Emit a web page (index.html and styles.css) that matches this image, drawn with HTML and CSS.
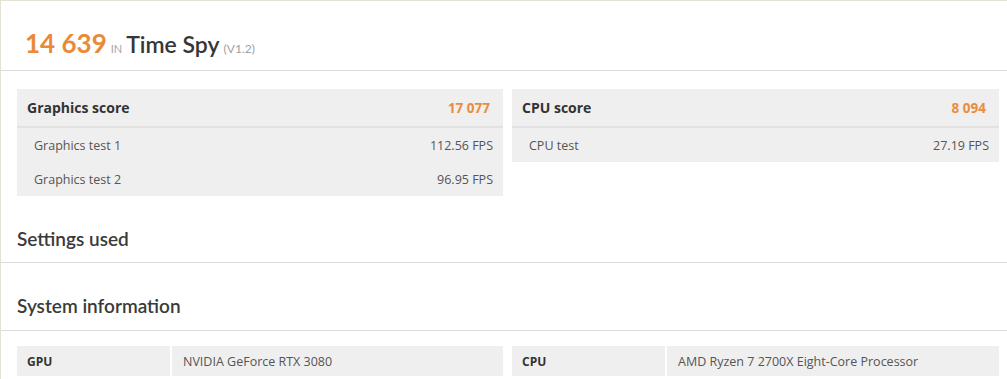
FILE: index.html
```html
<!DOCTYPE html>
<html>
<head>
<meta charset="utf-8">
<link rel="stylesheet" href="styles.css">
</head>
<body>
<div class="page">
  <header class="result-head">
    <span class="total">14 639</span>
    <span class="in">IN</span>
    <span class="bench">Time Spy</span>
    <span class="ver">(V1.2)</span>
  </header>

  <section class="scores">
    <div class="score-box">
      <div class="score-head">
        <span class="score-name">Graphics score</span>
        <span class="score-val">17 077</span>
      </div>
      <div class="score-row"><span>Graphics test 1</span><span>112.56 FPS</span></div>
      <div class="score-row"><span>Graphics test 2</span><span>96.95 FPS</span></div>
    </div>
    <div class="score-box">
      <div class="score-head">
        <span class="score-name">CPU score</span>
        <span class="score-val">8 094</span>
      </div>
      <div class="score-row"><span>CPU test</span><span>27.19 FPS</span></div>
    </div>
  </section>

  <h2 class="section-title">Settings used</h2>
  <h2 class="section-title sys">System information</h2>

  <section class="sysinfo">
    <div class="info-row">
      <div class="info-label">GPU</div>
      <div class="info-value">NVIDIA GeForce RTX 3080</div>
    </div>
    <div class="info-row">
      <div class="info-label">CPU</div>
      <div class="info-value">AMD Ryzen 7 2700X Eight-Core Processor</div>
    </div>
  </section>
</div>
</body>
</html>
```

FILE: styles.css
```css
html, body {
  margin: 0;
  padding: 0;
  background: #fff;
}
body {
  font-family: "Open Sans", "Liberation Sans", sans-serif;
  color: #333;
}
.page {
  border-left: 1px solid #e6e2d2;
  border-top: 1px solid #e6e2d2;
  min-height: 378px;
  overflow: hidden;
}
.result-head {
  height: 70px;
  border-bottom: 1px solid #dcdcdc;
  display: flex;
  align-items: baseline;
  padding: 0 0 0 24px;
  box-sizing: border-box;
  padding-top: 26px;
  font-family: Lato, "Open Sans", sans-serif;
}
.total {
  font-size: 26px;
  font-weight: 700;
  color: #e88a3a;
}
.in {
  font-size: 11px;
  color: #a5a5a5;
  margin-left: 4px;
  margin-right: 4px;
}
.bench {
  font-size: 23px;
  font-weight: 600;
  color: #363636;
}
.ver {
  font-size: 12px;
  color: #a0a0a0;
  margin-left: 4px;
}
.scores {
  display: grid;
  grid-template-columns: 486px 487px;
  column-gap: 9px;
  padding: 18px 0 0 16px;
  align-items: start;
}
.score-box {
  background: #efefef;
}
.score-head {
  height: 39px;
  display: flex;
  justify-content: space-between;
  align-items: center;
  padding: 0 13px 0 10px;
  border-bottom: 2px solid #e2e2e2;
  box-sizing: border-box;
}
.score-name {
  font-size: 14px;
  font-weight: 700;
  color: #333;
}
.score-val {
  font-size: 13.5px;
  font-weight: 700;
  color: #ea8c3e;
}
.score-row {
  height: 34px;
  display: flex;
  justify-content: space-between;
  align-items: center;
  padding: 0 10px 0 17px;
  font-size: 12.5px;
  color: #555;
}
.section-title {
  margin: 0;
  font-family: Lato, "Open Sans", sans-serif;
  font-size: 19px;
  font-weight: 600;
  color: #3a3a3a;
  height: 67px;
  box-sizing: border-box;
  padding: 31px 0 0 16px;
  border-bottom: 1px solid #dcdcdc;
}
.section-title.sys {
  height: 68px;
}
.sysinfo {
  display: grid;
  grid-template-columns: 486px 487px;
  column-gap: 9px;
  padding: 15px 0 0 16px;
}
.info-row {
  display: grid;
  grid-template-columns: 153px 1fr;
  column-gap: 2px;
  height: 30px;
}
.info-label, .info-value {
  background: #efefef;
  display: flex;
  align-items: center;
}
.info-label {
  font-size: 12px;
  font-weight: 700;
  color: #333;
  padding-left: 10px;
}
.info-value {
  font-size: 12.5px;
  color: #555;
  padding-left: 11px;
}
```
